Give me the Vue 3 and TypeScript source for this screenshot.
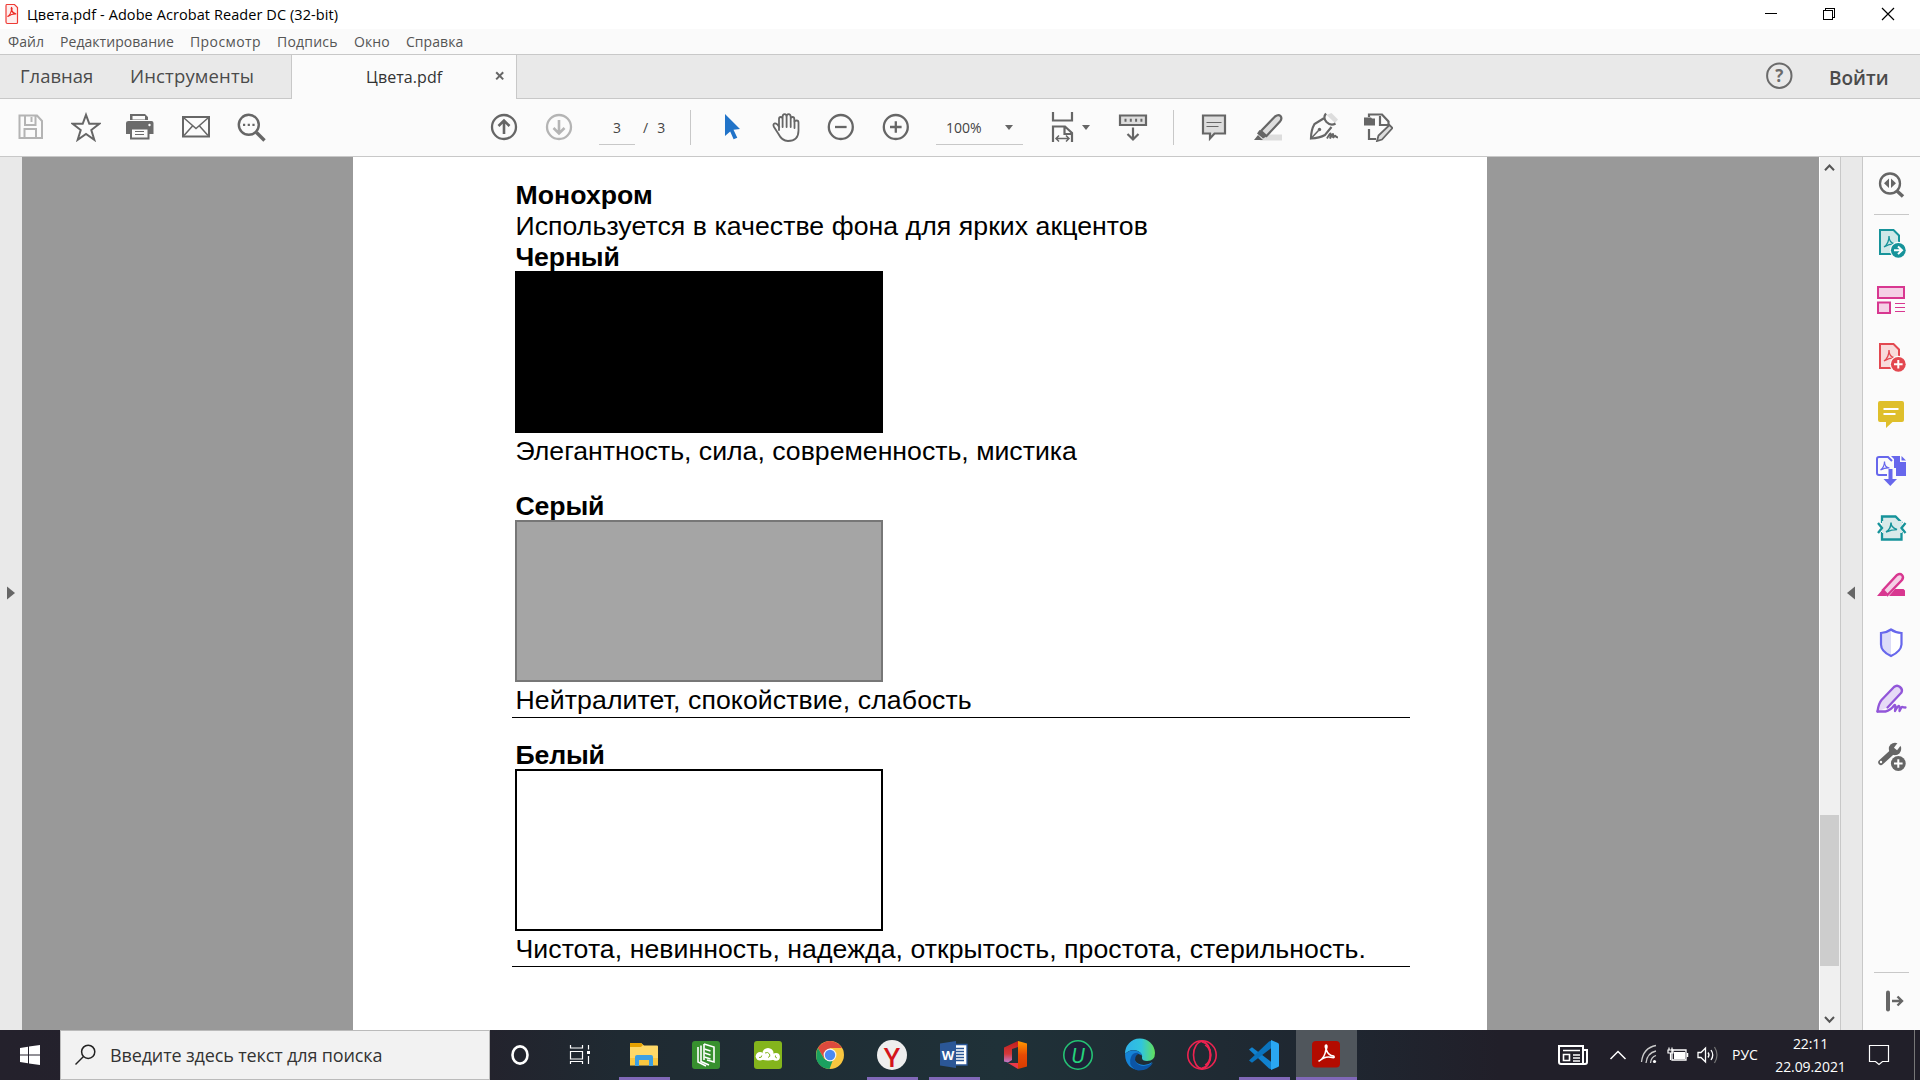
<script setup lang="ts">
interface MenuEntry { label: string; cls: string }
const menu: MenuEntry[] = [
  { label: 'Файл', cls: 'm1' },
  { label: 'Редактирование', cls: 'm2' },
  { label: 'Просмотр', cls: 'm3' },
  { label: 'Подпись', cls: 'm4' },
  { label: 'Окно', cls: 'm5' },
  { label: 'Справка', cls: 'm6' },
]
interface Swatch { name: string; kind: string; note: string; ruled: boolean }
const swatches: Swatch[] = [
  { name: 'Черный', kind: 'black', note: 'Элегантность, сила, современность, мистика', ruled: false },
  { name: 'Серый', kind: 'gray', note: 'Нейтралитет, спокойствие, слабость', ruled: true },
  { name: 'Белый', kind: 'white', note: 'Чистота, невинность, надежда, открытость, простота, стерильность.', ruled: true },
]
</script>

<template>
  <div class="screen">
    <header class="titlebar">
      <svg class="app-icon" viewBox="0 0 16 22" width="16" height="22">
        <path d="M2.500 1.500h8l3 3v15q0 1-1 1h-9q-1.500 0-1.500-1.500v-16q0-1.500.5-1.500z" fill="#fdeeee" stroke="#ee3b35" stroke-width="1.200" />
        <path d="M3.500 13.500q3-1.500 4-6.500q-.5-2 0-2.500q1 .5.300 3q1 3 4.500 3.500q-4-.5-8.500 2.500z" fill="none" stroke="#ee2a24" stroke-width="1.200" />
      </svg>
      <span class="win-title">Цвета.pdf - Adobe Acrobat Reader DC (32-bit)</span>
      <svg class="win-ctl" viewBox="1760 0 160 29" width="160" height="29" fill="none" stroke="#000" shape-rendering="crispEdges">
        <path d="M1765 13.500h12" />
        <path d="M1823.500 10.500h9v9h-9zM1825.500 10v-1.500h9v9h-2" />
        <path d="M1882 8l12 12M1894 8l-12 12" shape-rendering="auto" stroke-width="1.200" />
      </svg>
    </header>

    <nav class="menubar">
      <span v-for="m in menu" :key="m.label" :class="m.cls">{{ m.label }}</span>
    </nav>

    <div class="tabs">
      <div class="tabs-left">
        <span class="t-home">Главная</span><span class="t-tools">Инструменты</span>
      </div>
      <div class="tab-active">
        <span class="t-doc">Цвета.pdf</span>
        <svg class="tab-x" viewBox="0 0 10 10" width="10" height="10"><path d="M1.200 1.200l7 7.200M8.200 1.200l-7 7.200" stroke="#666" stroke-width="2" /></svg>
      </div>
      <div class="tabs-right">
        <svg viewBox="1765 61 28 28" width="28" height="28">
          <circle cx="1779.300" cy="75.700" r="12.200" fill="none" stroke="#6b6b6b" stroke-width="2" />
          <text x="1779.300" y="82" text-anchor="middle" font-family="Open Sans, sans-serif" font-weight="700" font-size="17" fill="#6b6b6b">?</text>
        </svg>
        <span class="t-login">Войти</span>
      </div>
    </div>

    <div class="toolbar">
      <div class="group g-file">
        <svg viewBox="16 112 30 30" fill="none" stroke="#b4b4b4" stroke-width="2">
          <path d="M19.500 115.500h17.500l5 5.500v17h-22.500zM25 116v9h10.500v-9M24.500 138v-9h11.500v9" />
          <path d="M31.500 117v5" />
        </svg>
        <svg viewBox="71 112 30 30"><path d="M86 114.800l3.300 9h10l-8 6.200 3 9.800-8.300-5.800-8.300 5.800 3-9.800-8-6.200h10z" fill="none" stroke="#666" stroke-width="2" /></svg>
        <svg viewBox="124 112 30 30">
          <path d="M130 114h15l3 3v3h-18zM128.500 121h23q2 0 2 2v11h-27.500v-11q0-2 2.500-2z" fill="#6b6b6b" />
          <path d="M132.500 116h12.500v3.500h-12.500z" fill="#fbfbfb" />
          <path d="M131 128.500h17.500v10h-17.500z" fill="#fbfbfb" stroke="#6b6b6b" stroke-width="2" />
          <path d="M135 131.500h9M135 134.500h9" stroke="#6b6b6b" />
          <circle cx="149.500" cy="125" r="1.200" fill="#fff" />
        </svg>
        <svg viewBox="181 112 30 30" fill="none" stroke="#666" stroke-width="2">
          <path d="M183 117h26v19.500h-26z" /><path d="M184 118l12 10.500 12-10.500M184 135.500l8.500-9.500M208 135.500l-8.500-9.500" stroke-width="1.500" />
        </svg>
        <svg viewBox="236 112 30 30" fill="none" stroke="#666">
          <circle cx="248.800" cy="124.800" r="10" stroke-width="2.400" /><path d="M256.500 132.500l8 8" stroke-width="3.400" />
          <path d="M243 124.800h2.200M247.700 124.800h2.200M252.400 124.800h2.200" stroke-width="2.200" />
        </svg>
      </div>
      <div class="group g-page">
        <svg viewBox="489 112 30 30" fill="none" stroke="#666" stroke-width="2.300"><circle cx="504" cy="127" r="12" /><path d="M504 134v-13M498.500 126l5.500-5.500 5.500 5.500" stroke-width="2.600" /></svg>
        <svg viewBox="544 112 30 30" fill="none" stroke="#b4b4b4" stroke-width="2.300"><circle cx="559" cy="127" r="12" /><path d="M559 120v13M553.500 128l5.500 5.500 5.500-5.500" stroke-width="2.600" /></svg>
      </div>
      <span class="page-box">3</span><span class="page-total"><i>/</i>3</span>
      <b class="vsep s1"></b>
      <div class="group g-view">
        <svg viewBox="716 112 30 30"><path d="M725 114l15 15-6.500.8 3.800 8-3.700 1.500-3.400-7.800-5.200 4.500z" fill="#2173c8" /></svg>
        <svg viewBox="770 112 30 30" fill="none" stroke="#666" stroke-width="1.800" stroke-linejoin="round" stroke-linecap="round">
          <path d="M778 130v-11q0-2 1.800-2t1.800 2v-2q0-2.800 2-2.800t2 2.800q0-2.800 2-2.800t2.100 2.800v2q0-2 1.800-2t1.800 2v3q.3-1.500 2.400-1.500 1.800 0 1.800 2v8q0 10.500-10.500 10.500-6 0-9.500-7l-4.500-7q-1.500-3 .8-3.600 2-.4 4.500 3.600M781.600 119v8M785.600 117v10M789.700 118v9M793.500 121v7" />
        </svg>
        <svg viewBox="826 112 30 30" fill="none" stroke="#666" stroke-width="2.300"><circle cx="840.800" cy="127" r="12" /><path d="M835 127h11.600" /></svg>
        <svg viewBox="881 112 30 30" fill="none" stroke="#666" stroke-width="2.300"><circle cx="895.800" cy="127" r="12" /><path d="M890 127h11.600M895.800 121.200v11.600" /></svg>
      </div>
      <div class="zoom-box"><span>100%</span><svg viewBox="0 0 8 5" width="8" height="5"><path d="M0 0h8l-4 5z" fill="#666" /></svg></div>
      <svg class="i-fit" viewBox="1046 110 50 34" width="50" height="34" fill="none" stroke="#666" stroke-width="2.200">
        <path d="M1053 112v8.500h19v-8.500" /><path d="M1053 142v-15.500h12l7 6.500v9M1064.500 127v7h7" />
        <path d="M1056 138.500h12.500M1059 135.500l-3 3 3 3M1066 135.500l3 3-3 3" stroke-width="1.500" />
        <path d="M1082 125h8l-4 5z" fill="#666" stroke="none" />
      </svg>
      <svg class="i-keys" viewBox="1118 112 30 30" fill="none" stroke="#666" stroke-width="2.200">
        <path d="M1120 115.500h26v9.500h-26z" fill="#ddd" /><path d="M1124.500 120.200h18" stroke-dasharray="2 3.300" stroke-width="3" />
        <path d="M1133 127.500v12M1127.500 134l5.500 5.500 5.500-5.500" />
      </svg>
      <b class="vsep s2"></b>
      <div class="group g-note">
        <svg viewBox="1198 112 30 30"><path d="M1203 115.500h22v18h-10.500l-4.500 5v-5h-7z" fill="#ddd" stroke="#666" stroke-width="2.200" /><path d="M1206.500 122.500h15M1206.500 126.500h12" stroke="#666" stroke-width="1.200" /></svg>
        <svg viewBox="1254 112 30 30"><path d="M1261 140.500l6-6h16v6z" fill="#ddd" /><path d="M1262 131l14-14.500q3.500-2.500 5.500-.500 2 2.500-.5 5.500l-13.500 14.500z" fill="#ddd" stroke="#666" stroke-width="2.200" /><path d="M1260.500 130l7 6.500-3.500 2-6-5zM1255 140l4-5 5 5z" fill="#666" /></svg>
        <svg viewBox="1308 112 30 30" fill="none" stroke="#666" stroke-width="2.200">
          <path d="M1326.500 115l8.500 8 3-3.500-6.500-6.500z" fill="#ddd" stroke="none" />
          <path d="M1326 113.500q-3.500 4 .5 8.500 4.500 4.500 9 1.500M1323.500 118.500l-9 5.500q-3.500 6-3.500 14.500 8.500-.5 14-3.500l6.500-8" />
          <path d="M1311 138.500l7.500-8" stroke-width="1.500" /><circle cx="1319.500" cy="129.500" r="1.700" fill="#666" stroke="none" />
          <path d="M1327 138.500q3-5.500 3.500-5t-.5 5q2.500-5 3-4.500t0 4q2-3 2.500-2t2.500 1.500" stroke-width="1.900" />
        </svg>
        <svg viewBox="1363 112 30 30" fill="none" stroke="#666" stroke-width="2.200">
          <path d="M1369 117v-2.500h13l6.500 7v3.500h-8.500v-9" /><path d="M1364 117.500h7l1 1h3v7h-11z" fill="#666" stroke="none" /><path d="M1369 129v10h7" />
          <path d="M1377 141l1.500-5.500 11-10.500 3 3-10.500 11.500z" fill="#ddd" stroke-width="1.800" />
        </svg>
      </div>
    </div>

    <main class="work">
      <aside class="left-rail"><svg viewBox="0 0 8 14" width="8" height="14"><path d="M0 .5l8 6.500-8 6.500z" fill="#666" /></svg></aside>
      <section class="canvas">
        <article class="page">
          <h1>Монохром</h1>
          <p class="intro">Используется в качестве фона для ярких акцентов</p>
          <div v-for="s in swatches" :key="s.kind" class="swatch-block">
            <h2>{{ s.name }}</h2>
            <div class="swatch" :class="s.kind"></div>
            <p class="note" :class="[s.kind + '-note', { ruled: s.ruled }]">{{ s.note }}</p>
          </div>
        </article>
      </section>
      <div class="scroll">
        <svg viewBox="0 0 20 20" width="20" height="20"><path d="M5 13.200l4.500-4.700 4.500 4.700" fill="none" stroke="#555" stroke-width="2" /></svg>
        <div class="thumb"></div>
        <svg class="sdown" viewBox="0 0 20 20" width="20" height="20"><path d="M5 7l4.500 4.700 4.500-4.700" fill="none" stroke="#555" stroke-width="2" /></svg>
      </div>
      <aside class="right-rail"><svg viewBox="0 0 8 14" width="8" height="14"><path d="M8 .5l-8 6.500 8 6.500z" fill="#666" /></svg></aside>
      <aside class="tools">
        <svg class="tool-icons" viewBox="1863 157 57 873" width="57" height="873" fill="none">
          <g stroke="#666"><circle cx="1890" cy="183.500" r="10" stroke-width="2.300" /><path d="M1897 191l6 5.500" stroke-width="3.500" /><path d="M1889 178.500v9.500l-5-4.700zM1891 178.500v9.500l5-4.700z" fill="#666" stroke="none" /></g>
          <path d="M1874 214.500h35M1874 972.500h35" stroke="#c8c8c8" />
          <g stroke="#16939a" stroke-width="2"><path d="M1880 230h13.500l5.500 5.500v18.500h-19z" fill="#cfe8e8" /><path d="M1884 247q5-3.500 5-11q0 7 6 8q-5-.5-11 3z" stroke-width="1.300" /><circle cx="1898.300" cy="250.300" r="8.500" fill="#fbfbfb" stroke="none" /><circle cx="1898.300" cy="250.300" r="7.400" fill="#16939a" stroke="none" /><path d="M1894 250.300h7M1898 246.500l4 3.800-4 3.800" stroke="#fff" /></g>
          <g stroke="#d83790" stroke-width="2"><path d="M1878 287h26v11h-26zM1878 302.500h12v10.500h-12z" fill="#f5d0e6" /><path d="M1895 303.500h10M1895 307.500h10M1895 311.500h10" stroke-width="1.200" /></g>
          <g stroke="#e34850" stroke-width="2"><path d="M1880 344h13.500l5.500 5.500v18.500h-19z" fill="#f8dada" /><path d="M1884 361q5-3.500 5-11q0 7 6 8q-5-.5-11 3z" stroke-width="1.300" /><circle cx="1898.300" cy="364.300" r="8.500" fill="#fbfbfb" stroke="none" /><circle cx="1898.300" cy="364.300" r="7.400" fill="#e34850" stroke="none" /><path d="M1894 364.300h8.600M1898.300 360v8.600" stroke="#fff" /></g>
          <path d="M1880 401h22q2 0 2 2v17q0 2-2 2h-9.500l-6.500 6v-6h-6q-2 0-2-2v-17q0-2 2-2z" fill="#dfbf2b" /><path d="M1883.500 409h15M1883.500 414h12" stroke="#fff" stroke-width="2" />
          <g stroke="#6767ec" stroke-width="2"><path d="M1887 475h-8q-2 0-2-2v-14q0-2 2-2h9l4 4" /><path d="M1880.500 470q4-3 4-8.500q0 6 5 6.500q-4-.5-9 2z" stroke-width="1.200" /><path d="M1891 456h9v6h6v14h-10v-8h-2v-9z" fill="#6767ec" stroke="none" /><path d="M1901.500 456l4.500 4.500h-4.500z" fill="#6767ec" stroke="none" /><path d="M1890.500 469v11" stroke-width="4" /><path d="M1883.500 479h13.500l-6.700 7z" fill="#6767ec" stroke="none" /></g>
          <g stroke="#16939a" stroke-width="2.300"><path d="M1882 523v-6.500h13.500l6.500 6.500M1882 532v7.500h19.500v-7.500" fill="#d8eaea" /><path d="M1882 521h20v12h-20z" fill="#d8eaea" stroke="none" /><path d="M1878 523l4 5-4 5M1905.500 523l-4 5 4 5" /><path d="M1886 532q5-3 5-9.500q0 5 6 7q-5 0-11 2.500z" stroke-width="1.500" /></g>
          <g stroke="#d83790" stroke-width="2.400"><path d="M1883 590l14-15q3-2 5 0t0 5l-14.500 15z" fill="#f5d0e6" /><path d="M1877 596l5.500-6.500 4.500 6.500zM1889 596l6-7h8.500l1.500 1.500v5.500z" fill="#d83790" stroke="none" /></g>
          <g><path d="M1891 629.500l10.500 4v11q-1 7-10.500 11q-9.500-4-10-11v-11z" fill="#fff" /><path d="M1891 629.500v26q-9.500-4-10-11v-11z" fill="#dcdcf8" /><path d="M1891 629.500q4 3 10.500 3.500v11.500q-.5 7-10.500 11.500q-10-4.500-10-11.500v-11.500q6-.5 10-3.500z" stroke="#6767ec" stroke-width="2.200" /></g>
          <g stroke="#9256d9" stroke-width="2.300" stroke-linejoin="round" stroke-linecap="round"><path d="M1877.500 711.500q1-8 4-11.500l12.500-13q3-2.500 6 0t1.500 5.500l-14 15" fill="#e6daf6" /><path d="M1877.500 711.500h8q5-1 9-6.500 1.500-.5.500 6 3-5.500 4-5t.5 5q2-4.500 3-4t3 .5" /></g>
          <g stroke="#666"><path d="M1881 762.300l11-10" stroke-width="5.500" stroke-linecap="round" /><circle cx="1895" cy="749" r="6.200" fill="#666" stroke="none" /><path d="M1895.500 749l5-6.500" stroke="#fbfbfb" stroke-width="4" /><circle cx="1881" cy="762" r="1.200" fill="#fff" stroke="none" /><circle cx="1898.300" cy="763.500" r="8.500" fill="#fbfbfb" stroke="none" /><circle cx="1898.300" cy="763.500" r="7.400" fill="#666" stroke="none" /><path d="M1894 763.500h8.600M1898.300 759.200v8.600" stroke="#fff" stroke-width="2" /></g>
          <g stroke="#666"><path d="M1888 992.500v17" stroke-width="4" stroke-linecap="round" /><path d="M1892 1001h9.500M1897.500 996.500l4.500 4.500-4.500 4.500" stroke-width="2.400" /></g>
        </svg>
      </aside>
    </main>

    <footer class="taskbar">
      <div class="start"><svg viewBox="0 0 20 20" width="20" height="20" fill="#fff"><path d="M0 3l8-1.200v7.700h-8zM9 1.600l11-1.600v9.500h-11zM0 10.500h8v7.700l-8-1.200zM9 10.500h11v9.500l-11-1.600z" /></svg></div>
      <div class="search">
        <svg viewBox="75 1044 22 22" width="22" height="22" fill="none" stroke="#222" stroke-width="1.500"><circle cx="88.200" cy="1051.800" r="6.600" /><path d="M83.500 1056.500l-8 8" /></svg>
        <span>Введите здесь текст для поиска</span>
      </div>
      <svg class="apps" viewBox="490 1030 868 50" width="868" height="50" fill="none">
        <defs>
          <linearGradient id="off" x1="0" y1="0" x2="0" y2="1"><stop offset="0" stop-color="#c11c1c" /><stop offset=".6" stop-color="#d33a3a" /><stop offset="1" stop-color="#c07bd0" /></linearGradient>
          <linearGradient id="offr" x1="0" y1="0" x2="0" y2="1"><stop offset="0" stop-color="#ff9a00" /><stop offset=".5" stop-color="#e84a04" /><stop offset="1" stop-color="#d83b01" /></linearGradient>
          <linearGradient id="edge" x1="0" y1="0" x2="1" y2="0"><stop offset="0" stop-color="#2fb1ea" /><stop offset=".55" stop-color="#31c5dc" /><stop offset="1" stop-color="#62e05a" /></linearGradient>
        </defs>
        <path d="M1296 1030h61v50h-61z" fill="#50565c" />
        <path d="M619 1077h51v3h-51zM867 1077h51v3h-51zM929 1077h51v3h-51zM1239 1077h51v3h-51zM1296 1077h61v3h-61z" fill="#8068b8" />
        <ellipse cx="520" cy="1055" rx="7.500" ry="8.600" stroke="#fff" stroke-width="2.600" />
        <g stroke="#fff" stroke-width="1.200"><path d="M570.500 1045v3h12v-3M570.500 1051.500h12v7.500h-12zM570.500 1064v-2.500h12v2.500M588.500 1045v4.500M588.500 1056v8" /><path d="M588.500 1051v3" stroke-width="3" /></g>
        <path d="M630 1043h11l3 2.500h13q1 0 1 1v19h-28z" fill="#ffd867" /><path d="M630 1043h11l2 2-2 2h-11z" fill="#e6a100" /><path d="M630 1058h28v7h-28z" fill="#fbc73f" /><path d="M635 1066v-9q0-2 2-2h14q2 0 2 2v9h-4v-6h-10v6z" fill="#3d9fe2" />
        <rect x="692" y="1041" width="28" height="28" rx="3" fill="#37902e" /><path d="M698 1047v15l8 4M701 1045.500v16l8 3.500M704 1044l10 3v15l-7-2M704 1044v16" stroke="#fff" stroke-width="1.600" /><path d="M704.500 1049l6 2M704.500 1053l6 2M704.500 1057l6 2" stroke="#fff" stroke-width="1.500" />
        <rect x="754" y="1041" width="28" height="28" rx="3" fill="#84b51c" />
        <g fill="#fff"><circle cx="760" cy="1056.300" r="4.300" /><circle cx="768" cy="1053.500" r="5.600" /><circle cx="776" cy="1056.800" r="3.900" /><ellipse cx="768" cy="1058" rx="8" ry="2.600" /></g>
        <path d="M759 1057.500q2.800.5 2.800-2M765 1053q3-1.500 4.500 1t-1.500 3.500M777 1058q-2.500-.5-1.500-2.500" stroke="#84b51c" />
        <circle cx="830" cy="1055" r="14" fill="#f9c63f" /><path d="M817.900 1048a14 14 0 0 1 24.200 0h-12l-6 10.500z" fill="#dc4a3d" /><path d="M817.900 1048l6.100 10.500q4 3 8.500 2.500l-3 8q-9-.5-12.500-8-2-7 .9-13z" fill="#1ba05f" /><circle cx="830" cy="1055" r="6.400" fill="#f4f4f4" /><circle cx="830" cy="1055" r="5.200" fill="#4a8af4" />
        <circle cx="892" cy="1055" r="15" fill="#eee" /><text x="892" y="1066.500" text-anchor="middle" font-family="Open Sans, sans-serif" font-weight="600" font-size="27.500" fill="#d4141c">Y</text>
        <path d="M953 1044.500h14v20.500h-14z" fill="#fff" stroke="#2b5797" stroke-width="1.300" /><path d="M956 1048.500h8M956 1051.500h8M956 1054.500h8M956 1057.500h8M956 1060.500h8" stroke="#2b5797" stroke-width="1.300" /><path d="M940 1043.500l16-2.500v27l-16-2.500z" fill="#2b5797" /><text x="948" y="1060" text-anchor="middle" font-family="Open Sans, sans-serif" font-weight="700" font-size="13" fill="#fff">W</text>
        <path d="M1004 1047.500l14-6.500v6l-6 2v11l-4 2.500-4-1z" fill="url(#off)" /><path d="M1018 1041l9 2.500v23l-9 2.500z" fill="url(#offr)" /><path d="M1008 1063l10 0v6z" fill="#e8394a" />
        <circle cx="1078" cy="1055" r="14.200" fill="#1d2138" stroke="#25c274" stroke-width="1.600" /><text x="1078" y="1062.500" text-anchor="middle" font-family="Roboto, sans-serif" font-style="italic" font-size="21" fill="#25d37c">U</text>
        <path d="M1125 1054a15 15 0 0 1 30-1q0 8-8 8-5 0-5-3 1-4-4-7-7-3-13 3z" fill="url(#edge)" /><path d="M1125 1054q5-5 11-3.500 6 2 6 5-4-3-7 0-2 5 3 8 7 3.500 14.500-1.500-5 8-13 8-14-1-14.500-16z" fill="#1583d6" /><path d="M1134 1069q-6-5-3-12 2-5 8-4-6 4-3 9.500 6 6.500 17 .5-5 8-15 7.500z" fill="#0c55a6" />
        <g stroke="#ee2350" stroke-width="1.600"><circle cx="1202" cy="1055" r="14.200" /><ellipse cx="1202" cy="1055" rx="8.500" ry="13.500" /><path d="M1202 1042q9 3 9 13t-9 13M1205 1045q5 3 5 10t-5 10" stroke-width="1.200" /></g>
        <path d="M1249 1049.500l3-2.300 20 15.300v7l-3-1z" fill="#1182cf" /><path d="M1249 1060.500l3 2.300 20-15.300v-7l-3 1z" fill="#0a73bd" /><path d="M1271 1040l7 3q1 .5 1 1.500v21q0 1-1 1.500l-7 3z" fill="#2aa7f2" />
        <rect x="1312" y="1041" width="28" height="26.500" rx="4" fill="#b30b00" /><path d="M1319 1061q6-3 7-12-1.500-4 .2-4 1.500.5 0 4.500 2 6 7.500 6.500 1.500 2-1.500 1.500-7-2-13 3.500z" stroke="#fff" stroke-width="1.600" stroke-linejoin="round" />
      </svg>
      <svg class="tray-icons" viewBox="1550 1030 180 50" width="180" height="50" fill="none" stroke="#fff">
        <path d="M1559 1046h24v18h-22q-2 0-2-2zM1583 1050h4v12q0 2-2 2h-3" stroke-width="2" /><path d="M1563 1050.500h17M1573 1055h7M1573 1058h7M1573 1061h7" stroke-width="1.400" /><path d="M1563.500 1054.500h6v6h-6z" stroke-width="1.600" />
        <path d="M1610.500 1059l7.500-7.500 7.500 7.500" stroke-width="1.500" />
        <path d="M1641.500 1062q1.500-14 14.500-16.500M1646 1063q1-10 10-12M1650.500 1063q.5-6 5.500-7.500" stroke-width="1.300" stroke="#ccc" /><circle cx="1654.500" cy="1061.500" r="1.600" fill="#fff" stroke="none" />
        <path d="M1672 1050h14v10h-14z" stroke-width="1.300" /><path d="M1674 1052h11v7h-11z" fill="#fff" stroke="none" /><path d="M1687.500 1053v4" stroke-width="1.500" /><path d="M1668 1050h5v3h-5zM1670.500 1053v7M1669 1047.500v3M1672 1047.500v3" stroke-width="1.200" />
        <path d="M1698 1052.500h3l4.500-4.500v14l-4.500-4.500h-3zM1708 1052.500q2 2.500 0 5M1711 1050q3.500 5 0 10" stroke-width="1.300" /><path d="M1714.500 1047q5 8 0 16" stroke="#777" stroke-width="1.200" />
      </svg>
      <span class="lang">РУС</span>
      <div class="clock"><span class="time">22:11</span><span class="date">22.09.2021</span></div>
      <svg class="notif" viewBox="1865 1030 55 50" width="55" height="50" fill="none" stroke="#fff"><path d="M1869.500 1045.500h19v16h-6l-3.500 3-3.500-3h-6z" stroke-width="1.200" /><path d="M1914.500 1030v50" stroke="#777" /></svg>
    </footer>
  </div>
</template>

<style>
body { margin: 0; overflow: hidden; }
</style>
<style scoped>
.screen { width: 1920px; height: 1080px; display: flex; flex-direction: column; overflow: hidden; background: #fbfbfb; font-family: "Open Sans", "Noto Sans", sans-serif; white-space: nowrap; }
.screen * { box-sizing: border-box; }
svg { display: block; flex: none; }
.titlebar { height: 29px; flex: none; display: flex; align-items: center; background: #fff; }
.app-icon { margin: -1px 0 0 4px; }
.win-title { margin-left: 7px; font-size: 14.5px; letter-spacing: 0.08px; line-height: 28px; color: #000; }
.win-ctl { margin-left: auto; }
.menubar { height: 26px; flex: none; display: flex; padding-left: 8px; border-bottom: 1px solid #c8c8c8; font-size: 14px; letter-spacing: 0.05px; line-height: 25px; color: #555; background: #fafafa; }
.menubar span { flex: none; }
.m1 { width: 52px; }
.m2 { width: 130px; }
.m3 { width: 87px; letter-spacing: 0.4px; }
.m4 { width: 77px; letter-spacing: 0.2px; }
.m5 { width: 52px; }
.tabs { height: 44px; flex: none; display: flex; background: #e9e9e9; color: #4b4b4b; }
.tabs-left { width: 291px; display: flex; border-bottom: 1px solid #c8c8c8; padding-left: 20px; font-size: 18.5px; line-height: 42px; }
.t-home { width: 110px; }
.t-tools { letter-spacing: 0.15px; }
.tab-active { width: 226px; display: flex; align-items: center; background: #fbfbfb; border: solid #c8c8c8; border-width: 0 1px; padding-left: 74px; color: #333; }
.t-doc { width: 129px; font-size: 16px; letter-spacing: 0.08px; line-height: 44px; }
.tab-x { margin-top: -2px; }
.tabs-right { flex: 1; display: flex; justify-content: flex-end; border-bottom: 1px solid #c8c8c8; padding: 6px 31px 0 0; }
.t-login { margin-left: 36px; width: 60px; font-size: 19px; font-weight: 600; line-height: 34px; }
.toolbar { height: 58px; flex: none; display: flex; padding-top: 13px; border-bottom: 1px solid #c8c8c8; background: #fbfbfb; color: #444; }
.toolbar svg { height: 30px; }
.group { display: flex; flex: none; }
.group svg { width: 30px; }
.g-file { margin-left: 16px; gap: 25px; }
.g-file svg:nth-child(3) { margin: 0 2px 0 -2px; }
.g-page { margin-left: 223px; gap: 25px; }
.page-box { margin-left: 25px; width: 36px; height: 33px; border-bottom: 1px solid #c8c8c8; text-align: center; font-size: 14px; line-height: 32px; }
.page-total { width: 35px; margin-left: 8px; font-size: 14px; line-height: 32px; }
.page-total i { font-style: normal; margin-right: 9px; }
.vsep { width: 1px; height: 35px; margin-top: -2px; background: #c8c8c8; flex: none; }
.s1 { margin-left: 12px; }
.g-view { margin-left: 25px; gap: 25px; }
.zoom-box { margin-left: 25px; width: 87px; height: 33px; border-bottom: 1px solid #c8c8c8; padding-left: 10px; display: flex; font-size: 14px; letter-spacing: 0; line-height: 32px; }
.zoom-box span { width: 59px; }
.zoom-box svg { height: 5px; margin-top: 13px; }
.toolbar .i-fit { margin: -2px 0 0 23px; height: 34px; }
.i-keys { width: 30px; margin-left: 22px; }
.s2 { margin-left: 25px; }
.g-note { margin-left: 24px; gap: 25px; }
.work { height: 873px; flex: none; display: flex; }
.left-rail { width: 22px; display: flex; align-items: center; padding: 0 0 2px 7px; background: #e9e9e9; }
.canvas { width: 1797px; background: #999; padding-left: 331px; }
.page { width: 1134px; height: 873px; background: #fff; padding: 23px 0 0 159px; font-family: "Liberation Sans", Arial, sans-serif; color: #000; }
h1, h2, p { margin: 0; font-size: 26.67px; line-height: 31px; height: 31px; }
h1, h2 { padding-left: 3.500px; }
h1 { letter-spacing: 0.05px; }
p { padding-left: 3.500px; }
.intro { letter-spacing: 0.05px; }
.swatch-block { height: 249px; }
h2 { height: 29px; letter-spacing: -0.15px; }
.swatch { width: 368px; height: 162px; margin-left: 3px; }
.black { background: #000; }
.gray { background: #a5a5a5; border: 2px solid #777; }
.white { background: #fff; border: 2px solid #000; }
.note { width: 898px; height: 36px; padding-top: 3px; }
.gray-note { letter-spacing: 0.1px; }
.white-note { letter-spacing: 0.05px; }
.ruled { border-bottom: 1px solid #000; }
.scroll { width: 22px; border-left: 1px solid #fff; border-right: 1px solid #c8c8c8; background: #f0f0f0; display: flex; flex-direction: column; }
.thumb { width: 19px; height: 151px; margin-top: 638px; background: #cdcdcd; }
.sdown { margin-top: auto; }
.right-rail { width: 22px; display: flex; align-items: center; padding: 0 0 2px 6px; background: #e9e9e9; border-right: 1px solid #c8c8c8; }
.tools { width: 57px; background: #fbfbfb; }
.taskbar { height: 50px; flex: none; display: flex; background: linear-gradient(90deg, #24212c 0, #23232d 490px, #1f2a32 620px, #1f3138 1000px, #1f2630 1350px, #211f29 1500px); color: #fff; }
.start { width: 60px; display: flex; align-items: center; padding-left: 20px; }
.search { width: 430px; display: flex; align-items: center; background: #f2f2f2; border: 1px solid #bbb; padding-left: 14px; color: #333; }
.search span { margin-left: 13px; font-size: 18px; letter-spacing: -0.14px; line-height: 48px; }
.tray-icons { margin-left: 192px; }
.lang { width: 36px; padding-left: 2px; font-size: 14px; line-height: 50px; }
.clock { width: 89px; padding: 2px 0 0 0; display: flex; flex-direction: column; align-items: center; font-size: 14px; letter-spacing: -0.1px; line-height: 23px; }
.notif { margin-left: 10px; }
</style>
